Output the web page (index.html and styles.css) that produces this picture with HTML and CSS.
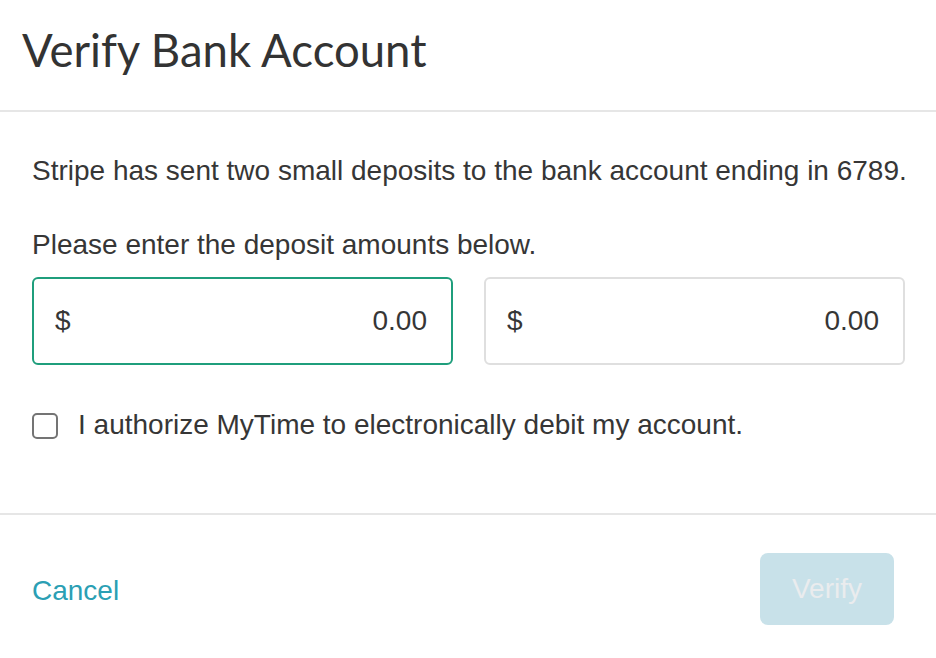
FILE: index.html
```html
<!DOCTYPE html>
<html lang="en">
<head>
<meta charset="utf-8">
<title>Verify Bank Account</title>
<link rel="stylesheet" href="styles.css">
</head>
<body>
<div class="modal">
  <header class="modal-header">
    <h1 class="modal-title">Verify Bank Account</h1>
  </header>
  <section class="modal-body">
    <p class="para first">Stripe has sent two small deposits to the bank account ending in 6789.</p>
    <p class="para second">Please enter the deposit amounts below.</p>
    <div class="amounts">
      <label class="amount focused"><span class="currency">$</span><span class="value">0.00</span></label>
      <label class="amount"><span class="currency">$</span><span class="value">0.00</span></label>
    </div>
    <label class="consent">
      <span class="checkbox"></span>
      <span class="consent-text">I authorize MyTime to electronically debit my account.</span>
    </label>
  </section>
  <footer class="modal-footer">
    <a class="cancel" href="#">Cancel</a>
    <button class="verify" type="button" disabled>Verify</button>
  </footer>
</div>
</body>
</html>
```
FILE: styles.css
```css
* { box-sizing: border-box; }
html, body { margin: 0; padding: 0; background: #fff; }
body {
  font-family: "Liberation Sans", Arial, sans-serif;
  color: #363636;
  width: 936px;
  height: 658px;
  overflow: hidden;
}
.modal-header {
  height: 112px;
  border-bottom: 2px solid #e6e6e6;
  padding: 23px 22px 0 22px;
}
.modal-title {
  margin: 0;
  font-family: "Lato", sans-serif;
  font-weight: 400;
  font-size: 45.5px;
  line-height: 54px;
  color: #333;
}
.modal-body {
  padding: 43px 31px 0 32px;
  height: 403px;
  border-bottom: 2px solid #e6e6e6;
}
.para {
  margin: 0;
  font-size: 28px;
  line-height: 32px;
  white-space: nowrap;
}
.second { margin-top: 42px; }
.amounts {
  margin-top: 16px;
  display: grid;
  grid-template-columns: 1fr 1fr;
  gap: 31px;
}
.amount {
  height: 88px;
  border: 2px solid #dfdfdf;
  border-radius: 6px;
  display: flex;
  align-items: center;
  justify-content: space-between;
  padding: 0 24px 0 21px;
  font-size: 28px;
}
.amount.focused { border-color: #1f9e7c; }
.consent {
  margin-top: 44px;
  display: flex;
  align-items: center;
  gap: 20px;
  font-size: 28px;
  line-height: 32px;
  white-space: nowrap;
}
.checkbox {
  width: 26px;
  height: 26px;
  border: 2px solid #747474;
  border-radius: 5px;
  flex: none;
  margin-top: 2px;
}
.modal-footer {
  display: flex;
  align-items: center;
  justify-content: space-between;
  padding: 38px 42px 0 32px;
}
.cancel {
  font-size: 28px;
  line-height: 32px;
  color: #2b9fb4;
  text-decoration: none;
  padding-top: 4px;
}
.verify {
  width: 134px;
  height: 72px;
  border: none;
  border-radius: 8px;
  background: #c8e1e9;
  color: #eaecee;
  font-family: "Liberation Sans", Arial, sans-serif;
  font-size: 28px;
  padding: 0;
}
```
